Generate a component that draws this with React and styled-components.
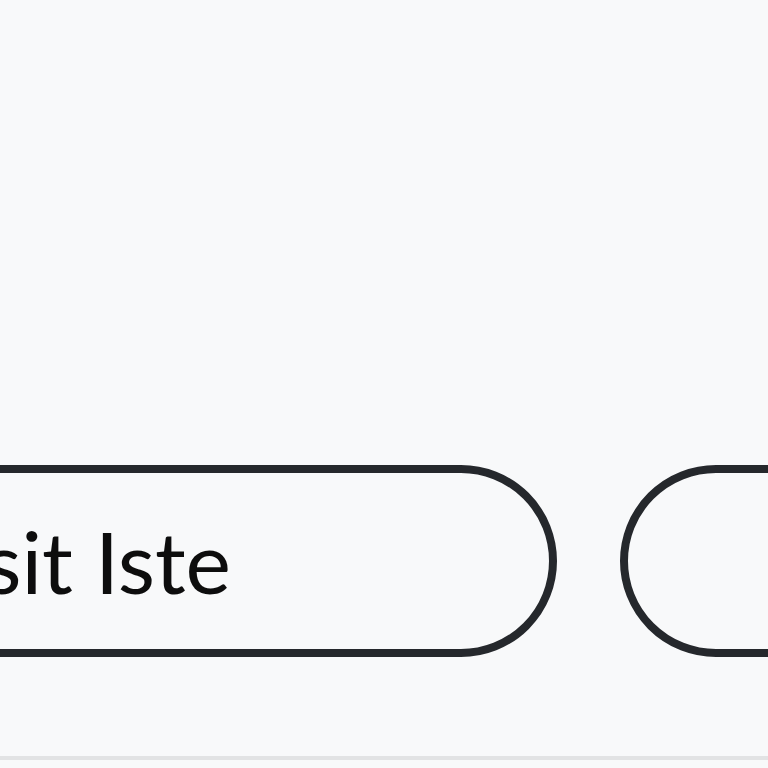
import React from 'react'
import styled, { createGlobalStyle } from 'styled-components'

const GlobalStyle = createGlobalStyle`
    html, body {
        margin: 0;
        padding: 0;
        background: #f8f9fa;
        font-family: Lato, "Noto Sans", sans-serif;
    }
`

const Section = styled.section`
    height: 760px;
    box-sizing: border-box;
    border-bottom: 4px solid #e2e3e4;
    overflow: hidden;
    padding-top: 465px;
`

// the chip strip is scrolled so only the end of the first chip shows
const ChipRow = styled.div`
    display: flex;
    gap: 63px;
    margin-left: -549px;
`

const Chip = styled.button`
    flex: none;
    box-sizing: border-box;
    width: ${p => p.$width}px;
    height: 192px;
    padding: 0 24px;
    display: flex;
    align-items: center;
    justify-content: center;
    background: transparent;
    border: 8px solid #25282c;
    border-radius: 999px;
    color: #0d0d0d;
    font-family: Lato, "Noto Sans", sans-serif;
    font-size: 86px;
    font-weight: 400;
    line-height: 1;
    white-space: nowrap;
    cursor: pointer;
`

const App = () => {
    return (
        <>
            <GlobalStyle />
            <Section>
                <ChipRow>
                    <Chip $width={1106}>Deposit Iste</Chip>
                    <Chip $width={1106}>Natus Error</Chip>
                </ChipRow>
            </Section>
        </>
    )
}

export default App
